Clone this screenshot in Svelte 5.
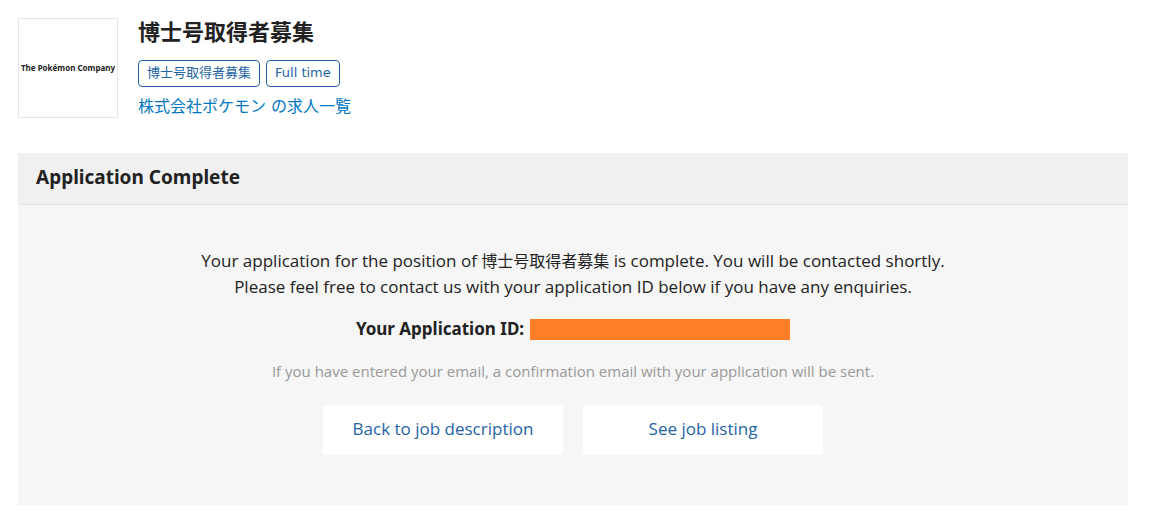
<script lang="ts">
	const title = '博士号取得者募集';
	const tags = [title, 'Full time'];
</script>

<svelte:head>
	<title>Application Complete</title>
</svelte:head>

<div class="page">
	<header>
		<div class="logo">The Pokémon Company</div>
		<div class="job">
			<h1>{title}</h1>
			<div class="tags">
				{#each tags as tag}
					<span class="tag">{tag}</span>
				{/each}
			</div>
			<a href="/jobs" class="company">株式会社ポケモン の求人一覧</a>
		</div>
	</header>

	<section class="panel">
		<h2>Application Complete</h2>
		<div class="body">
			<p class="message">
				Your application for the position of <span class="position">{title}</span> is complete. You will be contacted shortly.<br />
				Please feel free to contact us with your application ID below if you have any enquiries.
			</p>
			<p class="app-id">Your Application ID: <span class="redacted"></span></p>
			<p class="note">If you have entered your email, a confirmation email with your application will be sent.</p>
			<div class="actions">
				<a href="/job" class="btn">Back to job description</a>
				<a href="/jobs" class="btn">See job listing</a>
			</div>
		</div>
	</section>
</div>

<style>
	:global(body) {
		background: #fff;
		color: #222;
		font-family: 'Open Sans', 'Noto Sans CJK JP', sans-serif;
		font-size: 17px;
	}

	.page {
		padding: 18px 23px 26px 18px;
	}

	header {
		display: flex;
		gap: 20px;
		margin-bottom: 33px;
	}

	.logo {
		box-sizing: border-box;
		display: flex;
		align-items: center;
		justify-content: center;
		width: 100px;
		height: 100px;
		padding-bottom: 2px;
		border: 1px solid #e4e4e4;
		font-family: 'Noto Sans', sans-serif;
		font-size: 8px;
		font-weight: 700;
		white-space: nowrap;
	}

	h1 {
		margin: 0 0 12px;
		font-family: 'DejaVu Sans', 'Noto Sans CJK JP', sans-serif;
		font-size: 22px;
		line-height: 30px;
	}

	.tags {
		display: flex;
		gap: 6px;
		margin-bottom: 7px;
	}

	.tag {
		padding: 0 8px 2px;
		border: 1px solid #2464a4;
		border-radius: 4px;
		color: #2464a4;
		font-family: 'DejaVu Sans', 'Noto Sans CJK JP', sans-serif;
		font-size: 13px;
		line-height: 23px;
	}

	.company {
		display: block;
		color: #0077c0;
		font-family: 'DejaVu Sans', 'Noto Sans CJK JP', sans-serif;
		font-size: 16px;
		line-height: 26px;
		text-decoration: none;
	}

	.panel {
		background: #f6f6f6;
	}

	h2 {
		margin: 0;
		padding: 11px 18px 13px;
		border-bottom: 1px solid #e4e4e4;
		background: #f0f0f0;
		font-family: 'Noto Sans', sans-serif;
		font-size: 19px;
		line-height: 27px;
	}

	.body {
		padding: 43px 18px 50px;
		text-align: center;
	}

	p {
		margin: 0;
	}

	.message {
		line-height: 26px;
	}

	.position {
		font-size: 16px;
	}

	.app-id {
		display: flex;
		align-items: center;
		justify-content: center;
		gap: 6px;
		margin: 16px 0 17px;
		font-family: 'Noto Sans', sans-serif;
		font-weight: 700;
		line-height: 26px;
	}

	.redacted {
		width: 260px;
		height: 21px;
		background: #ff7f27;
	}

	.note {
		color: #999;
		font-size: 15px;
		line-height: 24px;
	}

	.actions {
		display: flex;
		flex-wrap: wrap;
		justify-content: center;
		gap: 20px;
		margin-top: 22px;
	}

	.btn {
		padding-bottom: 2px;
		width: 240px;
		border-radius: 3px;
		background: #fff;
		color: #2464a4;
		line-height: 48px;
		text-decoration: none;
	}
</style>
